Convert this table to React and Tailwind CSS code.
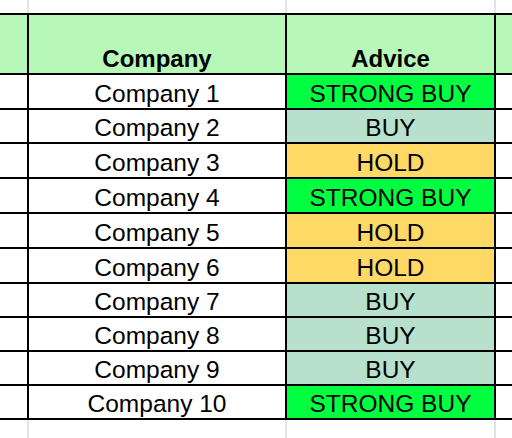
import React from "react";

const rows = [
  { name: "Company 1", advice: "STRONG BUY", h: "h-[33px]" },
  { name: "Company 2", advice: "BUY", h: "h-[32px]" },
  { name: "Company 3", advice: "HOLD", h: "h-[33px]" },
  { name: "Company 4", advice: "STRONG BUY", h: "h-[33px]" },
  { name: "Company 5", advice: "HOLD", h: "h-[33px]" },
  { name: "Company 6", advice: "HOLD", h: "h-[33px]" },
  { name: "Company 7", advice: "BUY", h: "h-[32px]" },
  { name: "Company 8", advice: "BUY", h: "h-[32px]" },
  { name: "Company 9", advice: "BUY", h: "h-[32px]" },
  { name: "Company 10", advice: "STRONG BUY", h: "h-[32px]" },
];

const adviceColors = {
  "STRONG BUY": "bg-[#00ff40]",
  BUY: "bg-[#b7e1cd]",
  HOLD: "bg-[#ffd966]",
};

const cols = "grid grid-cols-[27px_256px_207px_16px] gap-x-[2px]";

const GridGap = ({ h }) => (
  <div className={`${cols} ${h} bg-[#e4e4e4]`}>
    <div className="bg-white" />
    <div className="bg-white" />
    <div className="bg-white" />
    <div className="bg-white" />
  </div>
);

const Cell = ({ className = "", children }) => (
  <div className={`flex items-end justify-center pb-[1px] leading-[27px] whitespace-nowrap ${className}`}>
    {children}
  </div>
);

export default function App() {
  return (
    <div
      className="w-[512px] h-[438px] overflow-hidden bg-white text-black text-[24.5px]"
      style={{ fontFamily: '"Liberation Sans", Arial, sans-serif' }}
    >
      <GridGap h="h-[13px]" />
      <div className={`${cols} gap-y-[2px] py-[2px] bg-black`}>
        <Cell className="h-[58px] bg-[#b7f7b7]" />
        <Cell className="h-[58px] bg-[#b7f7b7] font-bold text-[24px]">Company</Cell>
        <Cell className="h-[58px] bg-[#b7f7b7] font-bold text-[24px]">Advice</Cell>
        <Cell className="h-[58px] bg-[#b7f7b7]" />
        {rows.map((r) => (
          <React.Fragment key={r.name}>
            <Cell className={`${r.h} bg-white`} />
            <Cell className={`${r.h} bg-white`}>{r.name}</Cell>
            <Cell className={`${r.h} ${adviceColors[r.advice]}`}>{r.advice}</Cell>
            <Cell className={`${r.h} bg-white`} />
          </React.Fragment>
        ))}
      </div>
      <GridGap h="h-[18px]" />
    </div>
  );
}
